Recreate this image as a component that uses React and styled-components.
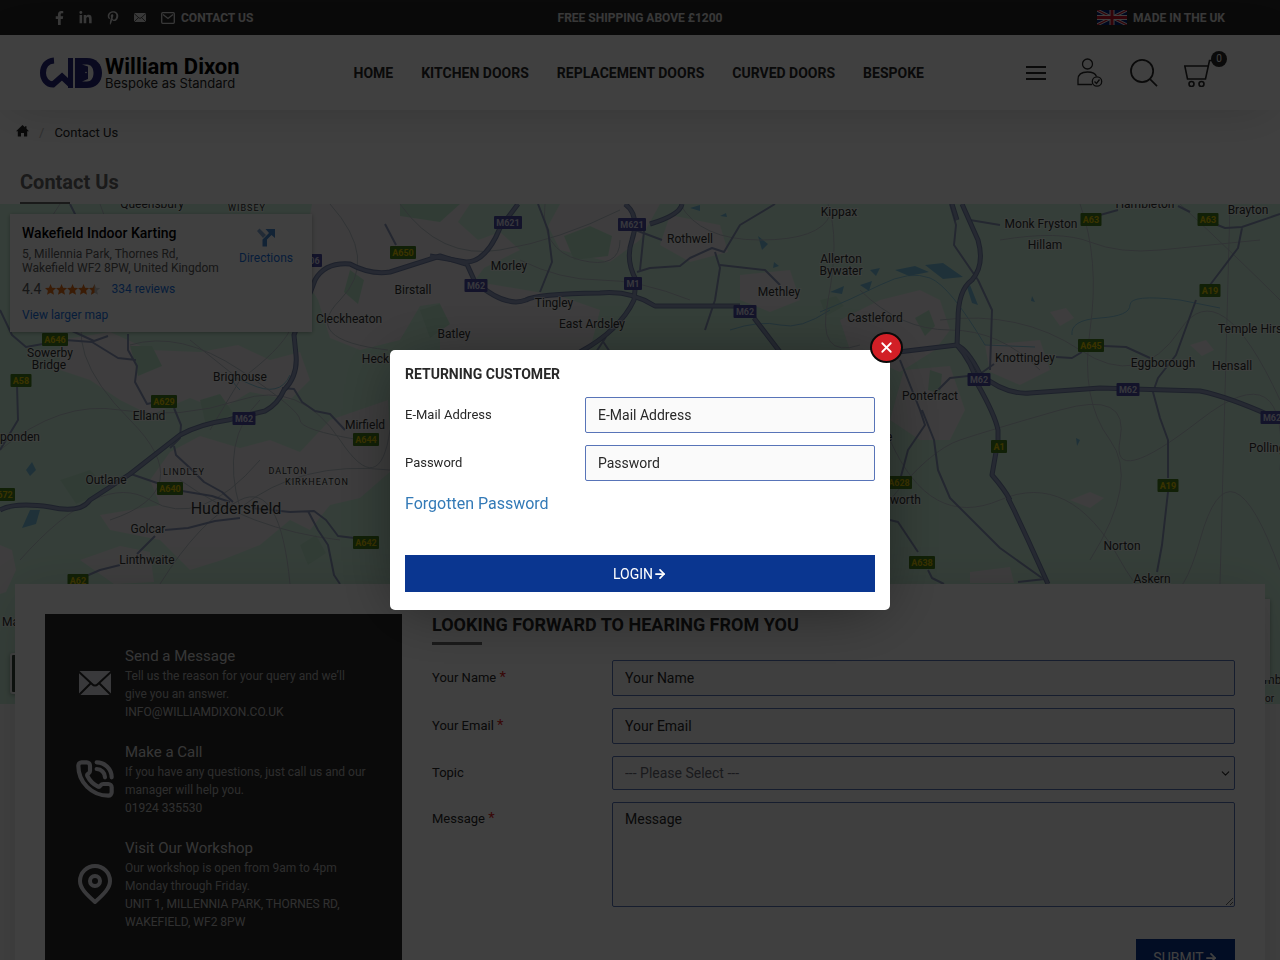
import React from "react";
import styled, { createGlobalStyle } from "styled-components";
import { FaFacebookF, FaLinkedinIn, FaPinterestP } from "react-icons/fa";
import { PhoneCall, ArrowRight, ChevronDown, X } from "lucide-react";

const GlobalStyle = createGlobalStyle`
  *, *::before, *::after { box-sizing: border-box; }
  body {
    margin: 0;
    height: 100vh;
    overflow: hidden;
    background: #fff;
    color: #282828;
    font-family: Roboto, "Liberation Sans", sans-serif;
    font-size: 14px;
  }
  a { color: inherit; text-decoration: none; }
  h1, h2, h3, p { margin: 0; }
  button, input, select, textarea { font-family: inherit; }
`;

const TopBar = styled.div`
  display: grid;
  grid-template-columns: 1fr auto 1fr;
  align-items: center;
  height: 35px;
  padding: 0 55px;
  background: #282828;
  color: #e4e4e4;
  font-size: 12px;
  font-weight: 700;
`;
const TopLinks = styled.div`
  display: flex;
  align-items: center;
  gap: 15px;
`;
const Social = styled.a`
  display: flex;
  width: ${(p) => p.$w || 12}px;
  justify-content: center;
`;
const IconText = styled.a`
  display: flex;
  align-items: center;
  gap: 6px;
  justify-self: ${(p) => (p.$end ? "end" : "start")};
`;

const Header = styled.header`
  position: relative;
  display: flex;
  align-items: center;
  justify-content: space-between;
  height: 75px;
  padding: 0 68px 0 40px;
  background: #fff;
  box-shadow: 0 5px 50px -10px rgba(0, 0, 0, 0.2);
`;
const LogoLink = styled.a`
  display: flex;
  gap: 3px;
  align-items: center;
  color: #000;
`;
const LogoText = styled.span`
  display: flex;
  flex-direction: column;
`;
const LogoName = styled.strong`
  font-size: 22px;
  line-height: 21px;
`;
const LogoTag = styled.span`
  font-family: Inter, sans-serif;
  color: #222;
  font-size: 13px;
  line-height: 13px;
`;
const Nav = styled.nav`
  display: flex;
  gap: 28px;
  padding-left: 16px;
  font-size: 14px;
  font-weight: 700;
`;
const Tools = styled.div`
  display: flex;
  align-items: center;
  gap: 26px;
`;
const ToolButton = styled.button`
  position: relative;
  display: flex;
  justify-content: center;
  width: 28px;
  padding: 0;
  border: 0;
  background: none;
  color: #282828;
`;
const CartCount = styled.span`
  position: absolute;
  top: -8px;
  left: 27px;
  width: 16px;
  height: 16px;
  border-radius: 50%;
  background: #282828;
  color: #fff;
  font-size: 10px;
  line-height: 16px;
  text-align: center;
`;

const Breadcrumb = styled.nav`
  display: flex;
  align-items: center;
  gap: 10px;
  height: 44px;
  padding: 0 16px;
  font-size: 13px;
`;
const Slash = styled.span`
  color: #bbb;
`;
const PageTitle = styled.h1`
  height: 50px;
  padding: 16px 20px 0;
  color: #696969;
  font-size: 20px;
  line-height: 24px;
  &::after {
    content: "";
    display: block;
    width: 50px;
    height: 2px;
    margin-top: 8px;
    background: #696969;
  }
`;

const MapArea = styled.section`
  position: relative;
  height: 500px;
  overflow: hidden;
`;
const MapSvg = styled.svg`
  display: block;
  width: 100%;
  height: 500px;
`;
const PlaceCard = styled.div`
  position: absolute;
  top: 10px;
  left: 10px;
  display: flex;
  justify-content: space-between;
  width: 302px;
  height: 118px;
  padding: 10px 12px;
  background: #fff;
  box-shadow: 0 1px 4px rgba(0, 0, 0, 0.3);
  color: #5b5b5b;
  font-size: 12px;
  line-height: 14px;
`;
const PlaceInfo = styled.div`
  width: 200px;
`;
const PlaceName = styled.h2`
  margin-bottom: 5px;
  color: #000;
  font-size: 14px;
  font-weight: 500;
  line-height: 18px;
`;
const Rating = styled.div`
  display: flex;
  align-items: center;
  gap: 4px;
  margin: 6px 0 11px;
  font-size: 14px;
  line-height: 16px;
`;
const MapLink = styled.a`
  color: #1a73e8;
  font-size: 12px;
`;
const ReviewsLink = styled(MapLink)`
  margin-left: 7px;
`;
const DirectionsLink = styled(MapLink)`
  display: flex;
  flex-direction: column;
  align-items: center;
  gap: 4px;
  width: 68px;
  padding-top: 4px;
`;
const ZoomControl = styled.div`
  position: absolute;
  right: 10px;
  bottom: 24px;
  width: 40px;
  height: 81px;
  background: #fff;
  box-shadow: 0 1px 4px rgba(0, 0, 0, 0.3);
`;
const SatelliteThumb = styled.div`
  position: absolute;
  left: 10px;
  bottom: 10px;
  width: 40px;
  height: 41px;
  border: 2px solid #fff;
  border-radius: 3px;
  background: #34463a;
  box-shadow: 0 1px 4px rgba(0, 0, 0, 0.3);
`;

const ContactCard = styled.main`
  position: relative;
  display: grid;
  grid-template-columns: 3fr 7fr;
  margin: -120px 15px 0;
  padding: 30px;
  min-height: 440px;
  background: #fff;
  box-shadow: 0 5px 50px -10px rgba(0, 0, 0, 0.2);
`;
const InfoPanel = styled.aside`
  display: flex;
  flex-direction: column;
  gap: 20px;
  min-height: 380px;
  padding: 31px 34px 30px 30px;
  background: #282828;
  color: #d8d8d8;
`;
const InfoItem = styled.div`
  display: flex;
  align-items: center;
  gap: 10px;
`;
const InfoIcon = styled.span`
  display: flex;
  flex: 0 0 40px;
  justify-content: center;
  color: #e3e3e9;
`;
const InfoTitle = styled.h3`
  font-size: 15px;
  font-weight: 400;
  line-height: 22px;
`;
const InfoText = styled.p`
  color: #b4b4b4;
  font-size: 12px;
  line-height: 18px;
`;
const InfoStrong = styled.a`
  display: block;
  color: #c0c0c0;
  font-size: 12px;
  line-height: 18px;
`;

const Form = styled.form`
  display: flex;
  flex-direction: column;
  gap: 12px;
  padding-left: 30px;
`;
const FormTitle = styled.h2`
  margin-bottom: 3px;
  font-size: 18px;
  line-height: 22px;
  &::after {
    content: "";
    display: block;
    width: 50px;
    height: 3px;
    margin-top: 6px;
    background: #696969;
  }
`;
const Field = styled.div`
  display: grid;
  grid-template-columns: 180px 1fr;
  align-items: ${(p) => (p.$top ? "start" : "center")};
`;
const Label = styled.label`
  font-size: 13px;
  line-height: 34px;
`;
const Star = styled.span`
  color: #e02020;
  font-size: 15px;
  line-height: 16px;
`;
const control = `
  width: 100%;
  border: 1px solid #5874b8;
  border-radius: 2px;
  background: #fafafa;
  color: #282828;
  font-size: 14px;
  &::placeholder { color: #282828; opacity: 1; }
`;
const Input = styled.input`
  ${control}
  height: 36px;
  padding: 0 12px;
`;
const SelectWrap = styled.div`
  position: relative;
`;
const Select = styled.select`
  ${control}
  display: block;
  height: 34px;
  padding: 0 12px;
  appearance: none;
  color: #696973;
`;
const SelectArrow = styled(ChevronDown)`
  position: absolute;
  top: 11px;
  right: 3px;
  pointer-events: none;
`;
const TextArea = styled.textarea`
  ${control}
  display: block;
  height: 105px;
  padding: 8px 12px;
  resize: vertical;
`;
const PrimaryButton = styled.button`
  display: flex;
  align-items: center;
  justify-content: center;
  height: 37px;
  padding: 0 16px;
  border: 0;
  background: #0a3690;
  color: #fff;
  font-size: 14px;
`;
const SubmitButton = styled(PrimaryButton)`
  align-self: flex-end;
  min-width: 99px;
  margin-top: 20px;
`;

const Overlay = styled.div`
  position: fixed;
  inset: 0;
  display: flex;
  align-items: center;
  justify-content: center;
  background: rgba(0, 0, 0, 0.75);
`;
const Dialog = styled.div`
  position: relative;
  width: 500px;
  max-width: 90vw;
  padding: 15px 15px 18px;
  border-radius: 5px;
  background: #fff;
  box-shadow: 0 5px 60px -10px rgba(0, 0, 0, 0.5);
`;
const DialogTitle = styled.h2`
  margin-bottom: 14px;
  font-size: 14px;
  line-height: 18px;
`;
const LoginForm = styled.form`
  display: flex;
  flex-direction: column;
  gap: 12px;
`;
const ForgotLink = styled.a`
  margin-bottom: 28px;
  color: #337ab7;
  font-size: 16px;
  line-height: 22px;
`;
const CloseButton = styled.button`
  position: absolute;
  top: -18px;
  right: -13px;
  display: flex;
  align-items: center;
  justify-content: center;
  width: 33px;
  height: 31px;
  padding: 0;
  border: 2px solid #0a0a0a;
  border-radius: 50%;
  background: #d21f26;
  color: #fff;
`;

const Envelope = ({ size, line }) => (
  <svg width={size} height={(size * 3) / 4} viewBox="0 0 32 24" aria-hidden="true">
    <path d="M0 0h32v24H0z" fill="currentColor" />
    <path d="M-1 0l14 13q3 3 6 0L33 0M0 24l12-12M32 24L20 12" fill="none" stroke={line} strokeWidth="2" />
  </svg>
);
const EnvelopeOutline = () => (
  <svg width="14" height="12" viewBox="0 0 14 12" fill="none" stroke="currentColor" strokeWidth="1.300" aria-hidden="true">
    <rect x="0.700" y="0.700" width="12.600" height="10.600" rx="1" />
    <path d="M2 2.5l5 4 5-4" />
  </svg>
);
const Flag = () => (
  <svg width="30" height="15" viewBox="0 0 60 30" aria-hidden="true">
    <path d="M0 0h60v30H0z" fill="#00247d" />
    <path d="M0 0l60 30M60 0L0 30" stroke="#fff" strokeWidth="6" />
    <path d="M0 0l60 30M60 0L0 30" stroke="#cf142b" strokeWidth="2.5" />
    <path d="M30 0v30M0 15h60" stroke="#fff" strokeWidth="10" />
    <path d="M30 0v30M0 15h60" stroke="#cf142b" strokeWidth="6" />
  </svg>
);
const LogoMark = () => (
  <svg width="62" height="32" viewBox="0 0 62 32" aria-hidden="true">
    <path d="M14 3.500C7 4 3 9 3 16C3 22 7 27.500 13 27.500L22 19.500L31 28" fill="none" stroke="#25257c" strokeWidth="6" />
    <path d="M28 1h5v30h-5z" fill="#25257c" />
    <path d="M35 1h12c9 0 15 6 15 15s-6 15-15 15H35z" fill="#25257c" />
    <path d="M42 7.500h5c4 0 6.500 3.500 6.500 8.500s-2.500 8.500-6.500 8.500h-5l6-2.500V9.500z" fill="#fff" />
    <circle cx="46" cy="15.500" r="0.800" fill="#fff" />
  </svg>
);
const MenuIcon = () => (
  <svg width="20" height="14" viewBox="0 0 20 14" aria-hidden="true">
    <path d="M0 1h20M0 7h20M0 13h20" stroke="currentColor" strokeWidth="2" />
  </svg>
);
const UserIcon = () => (
  <svg width="26" height="30" viewBox="0 0 26 30" fill="none" stroke="currentColor" strokeWidth="1.300" aria-hidden="true">
    <circle cx="10.500" cy="6" r="5" />
    <path d="M15 26.500H1v-5c0-5 4-7.500 9.500-7.500 4.500 0 8 1.500 9 4.500" />
    <circle cx="20" cy="23.500" r="4.700" />
    <path d="M17.500 23.500l2 2 3-4" />
  </svg>
);
const SearchIcon = () => (
  <svg width="28" height="28" viewBox="0 0 29 29" fill="none" stroke="currentColor" strokeWidth="1.800" aria-hidden="true">
    <circle cx="12.500" cy="12.500" r="11.500" />
    <path d="M20.500 20.500l7.500 7.500" />
  </svg>
);
const CartIcon = () => (
  <svg width="28" height="28" viewBox="0 0 28 28" fill="none" stroke="currentColor" strokeWidth="1.600" aria-hidden="true">
    <path d="M28 1.500h-2.500L21.500 20h-18L.8 7h23.200" />
    <circle cx="7.500" cy="25" r="2.500" />
    <circle cx="17.500" cy="25" r="2.500" />
  </svg>
);
const HomeIcon = () => (
  <svg width="13" height="12" viewBox="0 0 13 12" fill="currentColor" aria-hidden="true">
    <path d="M6.500 0l2.500 2.300V1.200h1.500v2.500L13 6.200h-1.800V11.500H8V8H5v3.500H1.800V6.200H0z" />
  </svg>
);
const PinIcon = () => (
  <svg width="34" height="41" viewBox="0 0 34 41" fill="none" stroke="currentColor" strokeWidth="4" aria-hidden="true">
    <path d="M17 38C8 30 2 24 2 17a15 15 0 0 1 30 0c0 7-6 13-15 21z" strokeLinejoin="round" />
    <circle cx="17" cy="17" r="5" />
  </svg>
);
const DirectionsIcon = () => (
  <svg width="20" height="19" viewBox="0 0 20 19" aria-hidden="true">
    <path d="M1 3l2.500-2.500L10 7 7 10z" fill="#86acd8" />
    <path d="M6.500 18.500V11.500L13 5 9.500 1H19v9l-3.500-3L11 11.500v7z" fill="#4a8ad4" />
  </svg>
);
const star = "M5.500 0l1.600 3.800 4 .3-3 2.700.9 4-3.500-2.100L2 10.800l.9-4L0 4.100l4-.3z";
const Stars = () => (
  <svg width="55" height="11" viewBox="0 0 55 11" aria-label="4.4 stars">
    {[0, 11, 22, 33].map((x) => (
      <path key={x} d={star} transform={`translate(${x} 0)`} fill="#e7711b" />
    ))}
    <path d={star} transform="translate(44 0)" fill="#c8c8c8" />
    <path d="M49.500 0v8.700L46 10.800l.9-4L44 4.100l4-.3z" fill="#e7711b" />
  </svg>
);

const urban = [
  "M312 204L470 204 458 222 478 240 500 232 520 250 484 268 460 300 420 306 400 340 360 350 330 338 318 300 300 270z",
  "M560 204L660 204 640 240 610 262 560 250 548 226z",
  "M60 340L110 332 150 350 200 352 238 345 270 360 300 352 310 380 290 400 250 392 220 410 190 398 150 415 120 400 90 380 60 370z",
  "M170 452L200 436 240 448 270 440 300 452 330 420 388 400 392 470 360 498 330 505 310 530 290 520 260 545 222 560 190 570 160 540 110 530 100 515 160 505 150 480z",
  "M440 300L490 284 560 296 600 310 590 350 440 350z",
  "M670 215L720 225 728 252 690 262 660 245z",
  "M840 320L880 300 920 290 940 300 950 330 935 350 900 372 850 350z",
  "M904 370L950 366 965 410 950 440 920 440 890 420z",
  "M985 345L1040 340 1050 370 1020 385 990 372z",
  "M740 275L790 270 800 300 770 312 740 300z",
  "M1050 312l16-4 8 10-14 8zM1190 345l16-5 8 10-12 6zM1070 500l20-8 14 6-14 10zM970 572l40-5 4 16-44 0z",
  "M0 545l12 5 4 20-10 22-6 2zM80 560l40-14 30 6 4 30-40 2z",
];
const forests = [
  "M240 300l24-10 14 14-20 14zM130 346l22 0 10 20-24 10zM350 270l14 10-6 24-14-12z",
  "M400 204l60 0-20 18-40-6zM564 236l26-10 22 10-4 20-34 4zM420 310l20-6 10 20-20 14z",
  "M915 318l14-8 6 16-10 10zM930 370l12 4-2 20-12-4zM820 300l16-4 8 10-18 10z",
  "M200 400l20-6 14 20-28 12zM60 480l30-10 20 20-34 14zM300 545l16-10 10 18-18 12z",
];
const minor = [
  "M0 450Q60 400 120 410T240 400 340 440 390 430", "M130 345Q180 330 240 370T300 420 360 440",
  "M20 560Q100 470 150 500T260 460", "M100 204Q120 250 90 300T130 420 110 520",
  "M330 204Q380 260 340 300T388 350", "M400 204Q440 260 500 250T620 210", "M520 260Q560 280 600 280T690 300",
  "M545 204Q540 250 580 260T620 240", "M680 204Q700 240 760 240T830 215", "M828 204Q840 240 828 300T860 345",
  "M890 500Q930 450 960 440T1060 410 1120 440 1200 420 1280 470", "M940 320Q1020 310 1080 350T1180 330 1280 400",
  "M1080 204Q1100 260 1090 330T1110 440 1090 560", "M1180 204Q1240 260 1280 300", "M1230 204L1220 584",
  "M890 440Q930 530 1000 500T1120 560 1200 540 1280 570", "M1000 240Q1060 230 1090 242T1160 250 1260 240",
  "M160 584Q200 520 240 500T290 584", "M180 480Q250 530 340 540", "M240 508Q220 440 260 400", "M240 508Q300 460 390 470",
  "M860 290Q900 330 950 330T1040 370", "M60 204Q20 260 50 300", "M240 380L210 430M240 380L190 340M240 380Q280 350 290 330",
];
const secondary = [
  "M0 310L12 335 26 347 65 340 92 342 118 358 136 360M70 330L94 341 108 336M128 334L128 350 137 366 135 382 147 404 156 402M174 408L181 425 180 438 170 448",
  "M17 385L18 420 0 450M70 204L76 216", "M128 473L160 484M182 491L212 496 230 502M174 446L176 455 190 468 204 482 222 492 233 502",
  "M165 530L188 528 215 521 240 518M155 536L137 554M120 565L100 570 84 577",
  "M252 508L290 512 314 511 326 520 338 536 354 538M308 511L318 530 328 545 334 575 340 584", "M282 388L294 389 302 402 315 411 330 414 345 430",
  "M385 224L396 245M538 204L548 230 552 262 540 292M606 337L596 352M602 340L610 352",
  "M630 228L662 240M645 222L640 270M715 252L720 268 715 300 705 330M637 272L650 268 680 266 690 258 712 248 724 252 740 225 775 204M720 265L765 270 780 285",
  "M970 220L1000 225M1100 215L1118 210M1178 206L1190 212M1215 224L1225 228 1242 227 1280 214M1242 228L1238 248 1210 285M1196 300L1176 355 1158 378 1153 392 1160 418 1168 440 1168 478M1168 492L1162 545 1157 572",
  "M950 204L956 225 954 245 978 280 992 310 990 370M1056 357L1072 358 1082 352M1104 346L1126 347 1150 358M900 360L920 410 925 425 908 450 900 480M922 410L934 440 938 470 950 498 1000 548 1042 578",
  "M938 390L950 378 968 376M980 374L994 364M890 520L898 522 918 552M928 570L932 578 944 584M1018 582L1045 579",
];
const motorways = [
  "M0 510Q15 502 50 507Q80 514 90 500L130 474L180 435Q200 424 228 420L265 411Q278 404 284 390Q298 376 296 355L294 335 315 280Q325 262 350 264Q370 275 390 272L440 256 466 264",
  "M518 204L500 228Q486 262 466 262L430 256M466 262L475 282Q506 308 526 300Q536 294 600 293Q630 290 655 306L740 306M754 318L780 352",
  "M625 204Q640 215 632 240Q625 260 636 280L634 300Q620 330 580 352M650 224Q680 215 682 204",
  "M952 204L957 220M962 204L978 240Q985 265 972 280Q958 290 958 320L957 345Q972 362 978 385Q995 415 998 430L998 442M996 452L992 475Q1005 490 1010 500",
  "M890 353L957 345Q968 350 980 374Q1005 395 1030 393L1100 388 1200 391Q1230 397 1280 420M1008 498L1014 510 1028 540 1048 584",
];
const water = [
  "M925 265l18-2 20 14-20 2zM860 285l12-4-3 10zM895 270l20-4 14 6-20 4zM870 270l10-2-4 8zM970 285l8 20-6-2-5-16zM830 292l14-6-2 8z",
  "M758 236l10 8-6 6zM774 262l5 4-6 2zM26 470l6-8 4 8-6 6zM30 510l10 0-4 14-14 4zM690 208l10-3 0 6zM720 216l6-3 1 4zM1076 438l4 2-3 6z",
  "M1032 296l3 6-4-1z",
];
const rivers = [
  "M820 312Q850 300 880 285T930 278 985 345L1035 347", "M1072 335Q1070 320 1100 318T1130 305 1180 300L1220 308",
  "M240 390Q220 370 250 384T290 375", "M730 330Q760 320 780 325T830 310",
];
const places = [
  ["Queensbury", 152, 208], ["Kippax", 839, 216], ["Rothwell", 690, 243], ["Morley", 509, 270], ["Birstall", 413, 294],
  ["Cleckheaton", 349, 323], ["Tingley", 554, 307], ["East Ardsley", 592, 328], ["Batley", 454, 338], ["Heckmondwike", 403, 363],
  ["Allerton", 841, 263], ["Bywater", 841, 275], ["Methley", 779, 296], ["Castleford", 875, 322], ["Monk Fryston", 1041, 228],
  ["Hillam", 1045, 249], ["Hambleton", 1145, 208], ["Brayton", 1248, 214], ["Knottingley", 1025, 362], ["Pontefract", 930, 400],
  ["Eggborough", 1163, 367], ["Hensall", 1232, 370], ["Norton", 1122, 550], ["Askern", 1152, 583], ["Sowerby", 50, 357],
  ["Bridge", 49, 369], ["Brighouse", 240, 381], ["Elland", 149, 420], ["Mirfield", 365, 429], ["Outlane", 106, 484],
  ["Golcar", 148, 533], ["Linthwaite", 147, 564],
];
const edgePlaces = [
  ["Temple Hirst", 1218, 333], ["Pollington", 1249, 452], ["ponden", 0, 441], ["worth", 890, 504], ["e", 886, 441],
  ["Marsden", 2, 626], ["rnby", 1264, 684],
];
const districts = [["WIBSEY", 247, 211], ["LINDLEY", 184, 475], ["DALTON", 288, 474], ["KIRKHEATON", 317, 485]];
const shields = [
  ["M621", 508, 222, 1], ["M621", 632, 224, 1], ["M62", 476, 285, 1], ["M1", 633, 283, 1], ["M62", 745, 311, 1],
  ["M62", 244, 418, 1], ["M62", 979, 379, 1], ["M62", 1128, 389, 1], ["M62", 1272, 417, 1], ["M606", 308, 260, 1],
  ["A650", 403, 252], ["A646", 55, 339], ["A58", 21, 380], ["A629", 164, 401], ["A644", 366, 439], ["A640", 170, 488],
  ["A642", 366, 542], ["A62", 78, 580], ["A672", 2, 494], ["A63", 1091, 219], ["A63", 1208, 219], ["A19", 1210, 290],
  ["A645", 1091, 345], ["A1", 999, 446], ["A628", 899, 482], ["A19", 1168, 485], ["A638", 922, 562],
];

const Lines = ({ paths, color, width }) => (
  <g fill="none" stroke={color} strokeWidth={width} strokeLinejoin="round">
    {paths.map((d) => <path key={d} d={d} />)}
  </g>
);
const Areas = ({ paths, color }) => (
  <g fill={color}>{paths.map((d) => <path key={d} d={d} />)}</g>
);

const RoadMap = () => (
  <MapSvg viewBox="0 204 1280 500" preserveAspectRatio="xMidYMin slice" role="img" aria-label="Map of the Wakefield area">
    <path d="M0 204h1280v500H0z" fill="#d3f8e2" />
    <Areas paths={urban} color="#f5f3f5" />
    <Areas paths={forests} color="#c4f0d4" />
    <Lines paths={rivers} color="#8fd0e6" width="1" />
    <Areas paths={water} color="#7cc4e4" />
    <Lines paths={minor} color="#c3ccd4" width="1" />
    <Lines paths={secondary} color="#8f9cc0" width="2" />
    <Lines paths={motorways} color="#7583ac" width="5" />
    <Lines paths={motorways} color="#97a5c6" width="3" />
    <g fontFamily="Roboto, sans-serif" fill="#333" stroke="#fff" strokeOpacity="0.6" strokeWidth="2" paintOrder="stroke">
      <g fontSize="12" textAnchor="middle">
        {places.map(([t, x, y]) => <text key={t} x={x} y={y}>{t}</text>)}
      </g>
      <g fontSize="12">
        {edgePlaces.map(([t, x, y]) => <text key={t} x={x} y={y}>{t}</text>)}
      </g>
      <text x="1265" y="702" fontSize="10">or</text>
      <g fontSize="9" letterSpacing="1" textAnchor="middle">
        {districts.map(([t, x, y]) => <text key={t} x={x} y={y}>{t}</text>)}
      </g>
      <text x="236" y="514" fontSize="16" textAnchor="middle">Huddersfield</text>
    </g>
    <g fontFamily="Roboto, sans-serif" fontSize="9" fontWeight="700" textAnchor="middle">
      {shields.map(([t, x, y, m]) => {
        const w = t.length * 5 + (m ? 8 : 6);
        return (
          <g key={`${t}-${x}`}>
            <rect x={x - w / 2} y={y - 6} width={w} height="13" rx="1" fill={m ? "#4c4ea8" : "#46801c"} />
            <text x={x} y={y + 4} fill={m ? "#dcdcf0" : "#e8cc00"}>{t}</text>
          </g>
        );
      })}
    </g>
  </MapSvg>
);

export default function App() {
  return (
    <>
      <GlobalStyle />
      <TopBar>
        <TopLinks>
          <Social href="#facebook" $w={9} aria-label="Facebook"><FaFacebookF size={14} /></Social>
          <Social href="#linkedin" $w={13} aria-label="LinkedIn"><FaLinkedinIn size={14} /></Social>
          <Social href="#pinterest" aria-label="Pinterest"><FaPinterestP size={14} /></Social>
          <Social href="#mail" aria-label="Mail"><Envelope size={12} line="#282828" /></Social>
          <IconText href="#contact"><EnvelopeOutline />CONTACT US</IconText>
        </TopLinks>
        <span>FREE SHIPPING ABOVE £1200</span>
        <IconText href="#uk" $end><Flag />MADE IN THE UK</IconText>
      </TopBar>
      <Header>
        <LogoLink href="#home">
          <LogoMark />
          <LogoText>
            <LogoName>William Dixon</LogoName>
            <LogoTag>Bespoke as Standard</LogoTag>
          </LogoText>
        </LogoLink>
        <Nav>
          {["HOME", "KITCHEN DOORS", "REPLACEMENT DOORS", "CURVED DOORS", "BESPOKE"].map((t) => (
            <a key={t} href="#nav">{t}</a>
          ))}
        </Nav>
        <Tools>
          <ToolButton aria-label="Menu"><MenuIcon /></ToolButton>
          <ToolButton aria-label="Account"><UserIcon /></ToolButton>
          <ToolButton aria-label="Search"><SearchIcon /></ToolButton>
          <ToolButton aria-label="Cart"><CartIcon /><CartCount>0</CartCount></ToolButton>
        </Tools>
      </Header>
      <Breadcrumb>
        <a href="#home" aria-label="Home"><HomeIcon /></a>
        <Slash>/</Slash>
        <a href="#contact">Contact Us</a>
      </Breadcrumb>
      <PageTitle>Contact Us</PageTitle>
      <MapArea>
        <RoadMap />
        <PlaceCard>
          <PlaceInfo>
            <PlaceName>Wakefield Indoor Karting</PlaceName>
            <p>5, Millennia Park, Thornes Rd, Wakefield WF2 8PW, United Kingdom</p>
            <Rating>4.4<Stars /><ReviewsLink href="#reviews">334 reviews</ReviewsLink></Rating>
            <MapLink href="#map">View larger map</MapLink>
          </PlaceInfo>
          <DirectionsLink href="#directions"><DirectionsIcon />Directions</DirectionsLink>
        </PlaceCard>
        <ZoomControl />
        <SatelliteThumb />
      </MapArea>
      <ContactCard>
        <InfoPanel>
          <InfoItem>
            <InfoIcon><Envelope size={32} line="#282828" /></InfoIcon>
            <div>
              <InfoTitle>Send a Message</InfoTitle>
              <InfoText>Tell us the reason for your query and we’ll give you an answer.</InfoText>
              <InfoStrong href="#mail">INFO@WILLIAMDIXON.CO.UK</InfoStrong>
            </div>
          </InfoItem>
          <InfoItem>
            <InfoIcon><PhoneCall size={40} strokeWidth={2.5} /></InfoIcon>
            <div>
              <InfoTitle>Make a Call</InfoTitle>
              <InfoText>If you have any questions, just call us and our manager will help you.</InfoText>
              <InfoStrong href="#call">01924 335530</InfoStrong>
            </div>
          </InfoItem>
          <InfoItem>
            <InfoIcon><PinIcon /></InfoIcon>
            <div>
              <InfoTitle>Visit Our Workshop</InfoTitle>
              <InfoText>Our workshop is open from 9am to 4pm Monday through Friday.</InfoText>
              <InfoStrong href="#visit">UNIT 1, MILLENNIA PARK, THORNES RD, WAKEFIELD, WF2 8PW</InfoStrong>
            </div>
          </InfoItem>
        </InfoPanel>
        <Form>
          <FormTitle>LOOKING FORWARD TO HEARING FROM YOU</FormTitle>
          <Field>
            <Label htmlFor="name">Your Name <Star>*</Star></Label>
            <Input id="name" placeholder="Your Name" />
          </Field>
          <Field>
            <Label htmlFor="email">Your Email <Star>*</Star></Label>
            <Input id="email" placeholder="Your Email" />
          </Field>
          <Field>
            <Label htmlFor="topic">Topic</Label>
            <SelectWrap>
              <Select id="topic"><option>--- Please Select ---</option></Select>
              <SelectArrow size={13} />
            </SelectWrap>
          </Field>
          <Field $top>
            <Label htmlFor="message">Message <Star>*</Star></Label>
            <TextArea id="message" placeholder="Message" />
          </Field>
          <SubmitButton type="button">SUBMIT<ArrowRight size={14} strokeWidth={3} /></SubmitButton>
        </Form>
      </ContactCard>
      <Overlay>
        <Dialog role="dialog" aria-modal="true" aria-labelledby="login-title">
          <CloseButton aria-label="Close"><X size={17} strokeWidth={2.5} /></CloseButton>
          <DialogTitle id="login-title">RETURNING CUSTOMER</DialogTitle>
          <LoginForm>
            <Field>
              <Label htmlFor="login-email">E-Mail Address</Label>
              <Input id="login-email" placeholder="E-Mail Address" />
            </Field>
            <Field>
              <Label htmlFor="login-password">Password</Label>
              <Input id="login-password" type="password" placeholder="Password" />
            </Field>
            <ForgotLink href="#forgot">Forgotten Password</ForgotLink>
            <PrimaryButton type="button">LOGIN<ArrowRight size={14} strokeWidth={3} /></PrimaryButton>
          </LoginForm>
        </Dialog>
      </Overlay>
    </>
  );
}
